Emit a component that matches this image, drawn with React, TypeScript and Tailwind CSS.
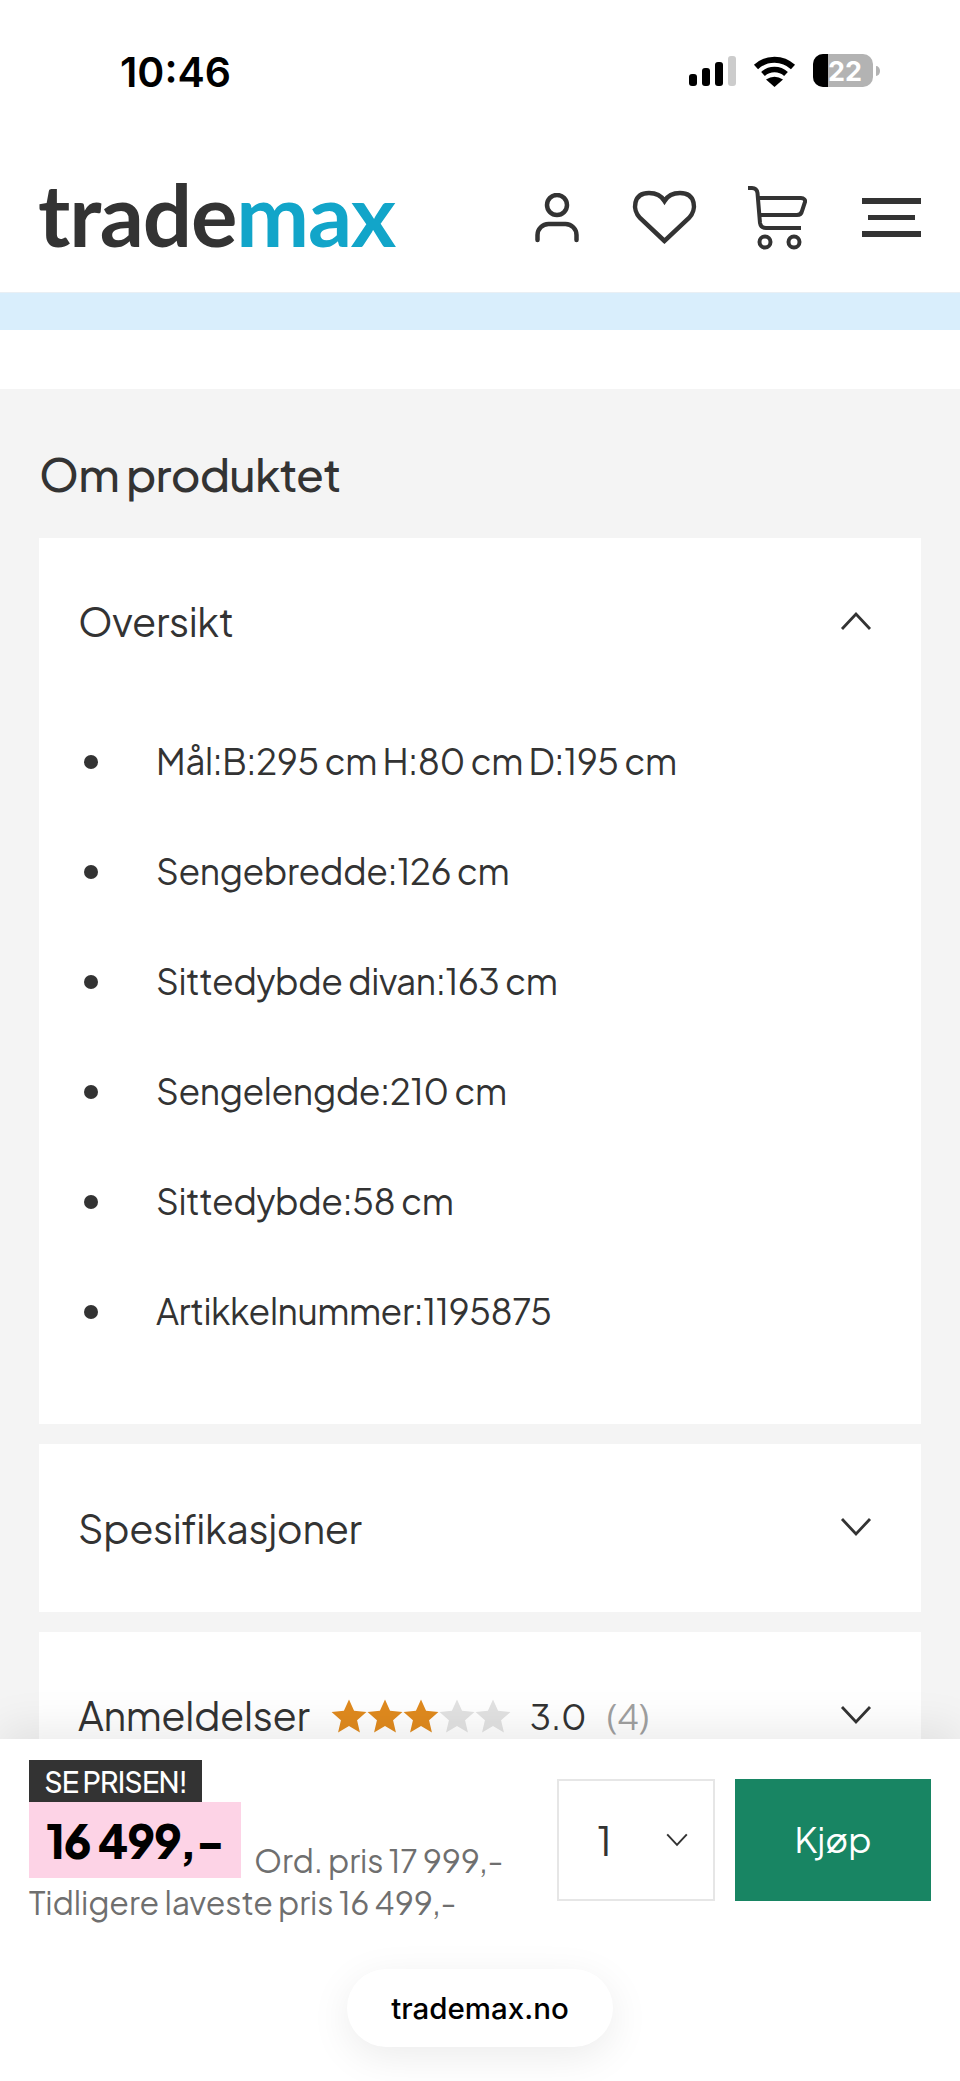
import React from "react";

function Chevron({ up, className }: { up?: boolean; className?: string }) {
  return (
    <svg viewBox="0 0 32 20" className={className} fill="none" stroke="#333333" strokeWidth="2.8">
      <path d={up ? "M2 18 L16 3 L30 18" : "M2 2 L16 17 L30 2"} />
    </svg>
  );
}

function Star({ color }: { color: string }) {
  return (
    <svg viewBox="0 0 24 24" className="w-[38px] h-[38px] -mx-[1px]">
      <path fill={color} d="M12 1.5l3.2 7.2 7.8.8-5.9 5.2 1.8 7.7L12 18.3 5.1 22.4l1.8-7.7L1 9.5l7.8-.8z" />
    </svg>
  );
}

const items = [
  "Mål:B:295 cm H:80 cm D:195 cm",
  "Sengebredde:126 cm",
  "Sittedybde divan:163 cm",
  "Sengelengde:210 cm",
  "Sittedybde:58 cm",
  "Artikkelnummer:1195875",
];

export default function App() {
  return (
    <div className="w-[960px] h-[2081px] overflow-hidden relative bg-white text-[#333333] [font-family:'Plus_Jakarta_Sans','Inter',sans-serif]">
      {/* status bar */}
      <div className="h-[134px] flex items-start justify-between pl-[120px] pr-[80px] pt-[50px]">
        <span className="text-[41px] leading-[44px] font-semibold text-black font-['Inter',sans-serif]">10:46</span>
        <svg viewBox="0 0 191 34" className="w-[191px] h-[34px] mt-[4px]">
          <rect x="0" y="20" width="8" height="12" rx="3" fill="#000" />
          <rect x="13" y="14" width="8" height="18" rx="3" fill="#000" />
          <rect x="26" y="8" width="8" height="24" rx="3" fill="#000" />
          <rect x="39" y="2" width="8" height="30" rx="3" fill="#cccccc" />
          <path d="M67 13 A 27 27 0 0 1 104 13" fill="none" stroke="#000" strokeWidth="6" />
          <path d="M74 20 A 17 17 0 0 1 97 20" fill="none" stroke="#000" strokeWidth="5.500" />
          <path d="M85.500 33 L77 25.500 Q85.500 20 94 25.500 Z" fill="#000" />
          <rect x="124" y="0" width="60" height="33" rx="10" fill="#b3b3b3" />
          <path d="M134 0 H139 V33 H134 A10 10 0 0 1 124 23 V10 A10 10 0 0 1 134 0Z" fill="#000" />
          <path d="M187 12 a4 5 0 0 1 0 10Z" fill="#b3b3b3" />
          <text x="139" y="27" fontSize="27" fontWeight="700" fill="#fff" fontFamily="Inter">22</text>
        </svg>
      </div>

      {/* header */}
      <div className="h-[158px] flex items-start justify-between pl-[38px] pr-[39px]">
        <div className="text-[87px] leading-[100px] font-bold tracking-[-1.2px] mt-[30px] font-['Lato',sans-serif]">
          <span className="text-[#333333]">trade</span>
          <span className="text-[#12a5c9]">max</span>
        </div>
        <div className="flex items-start mt-[51px]">
          <svg viewBox="0 0 48 50" className="w-[48px] h-[50px] mt-[8px]" fill="none" stroke="#333333" strokeWidth="4.5" strokeLinecap="round">
            <circle cx="24" cy="12" r="10" />
            <path d="M4.500 47 V42 A11 11 0 0 1 15.500 31 H32.500 A11 11 0 0 1 43.500 42 V47" />
          </svg>
          <svg viewBox="0 0 65 56" className="w-[65px] h-[56px] ml-[51px] mt-[5px]" fill="none" stroke="#333333" strokeWidth="4.5">
            <path d="M32.500 51 L8 28 C0 20 1 3 17 3 C24 3 29.500 6 32.500 11 C35.500 6 41 3 48 3 C64 3 65 20 57 28 Z" />
          </svg>
          <svg viewBox="0 0 60 65" className="w-[60px] h-[65px] ml-[50px]" fill="none" stroke="#333333" strokeWidth="4">
            <path d="M1 3 H5 C9 3 10 5 10.500 8 L13 38 C13.500 41 15 43 19 43 H54" />
            <path d="M12 13 H54 C57 13 58.500 15 58 17 L55 26 C54.500 28.500 53 30 50 30 H13" />
            <circle cx="18" cy="57" r="5.500" />
            <circle cx="47" cy="57" r="5.500" />
          </svg>
          <div className="flex flex-col items-center gap-[11px] ml-[55px] mt-[13px]">
            <div className="w-[59px] h-[6px] bg-[#333333]" />
            <div className="w-[47px] h-[5px] bg-[#333333]" />
            <div className="w-[59px] h-[6px] bg-[#333333]" />
          </div>
        </div>
      </div>

      {/* band */}
      <div className="h-[38px] bg-[#d9eefc] border-t border-[#e9eff4]" />
      <div className="h-[59px]" />

      {/* main */}
      <div className="bg-[#f4f4f4] h-[1692px] px-[39px]">
        <h2 className="pt-[58px] text-[45.500px] leading-[54px] font-medium tracking-[-0.8px]">Om produktet</h2>
        <div className="mt-[37px] bg-white">
          <div className="h-[169px] pl-[39px] pr-[49px] flex items-center justify-between">
            <span className="text-[39.600px] tracking-[-0.4px] -mt-[1px]">Oversikt</span>
            <Chevron up className="w-[32px] h-[20px] -mt-[4px]" />
          </div>
          <ul className="pb-[57px]">
            {items.map((t) => (
              <li key={t} className="h-[110px] flex items-center pl-[45px]">
                <span className="w-[14px] h-[14px] rounded-full bg-[#333333]" />
                <span className="ml-[58px] text-[35.400px] tracking-[-0.45px] -mt-[2px]">{t}</span>
              </li>
            ))}
          </ul>
        </div>
        <div className="mt-[20px] h-[168px] bg-white pl-[39px] pr-[49px] flex items-center justify-between">
          <span className="text-[39.600px] tracking-[-0.4px] mt-[2px]">Spesifikasjoner</span>
          <Chevron className="w-[32px] h-[20px] -mt-[2px]" />
        </div>
        <div className="mt-[20px] h-[168px] bg-white pl-[39px] pr-[49px] flex items-center justify-between">
          <div className="flex items-center">
            <span className="text-[39.600px] tracking-[-0.35px]">Anmeldelser</span>
            <span className="flex ml-[21px]">
              <Star color="#e08a1e" />
              <Star color="#e08a1e" />
              <Star color="#e08a1e" />
              <Star color="#e2e2e2" />
              <Star color="#e2e2e2" />
            </span>
            <span className="ml-[19px] text-[35px]">3.0</span>
            <span className="ml-[20px] text-[35px] text-[#a0a0a0]">(4)</span>
          </div>
          <Chevron className="w-[32px] h-[20px] -mt-[2px]" />
        </div>
      </div>

      {/* sticky footer */}
      <div className="absolute left-0 right-0 top-[1739px] h-[342px] bg-white shadow-[0_-12px_40px_rgba(0,0,0,0.08)]">
        <div className="flex justify-between pl-[29px] pr-[29px]">
          <div className="pt-[21px]">
            <div className="w-[173px] h-[42px] bg-[#333333] text-white text-[28.500px] leading-[42px] text-center tracking-[-0.8px] font-medium">SE PRISEN!</div>
            <div className="flex items-end">
              <div className="w-[212px] h-[76px] bg-[#fdd3e6] text-black text-[46px] leading-[76px] font-extrabold text-center tracking-[-1px]">16 499,-</div>
              <span className="ml-[13px] text-[32px] leading-[36px] text-[#6f6f6f] tracking-[-0.15px]">Ord. pris 17 999,-</span>
            </div>
            <div className="text-[32px] leading-[42px] mt-[3px] text-[#6f6f6f] tracking-[-0.1px]">Tidligere laveste pris 16 499,-</div>
          </div>
          <div className="flex pt-[40px] gap-[20px] items-start">
            <div className="w-[158px] h-[122px] border-2 border-[#e6e6e6] flex items-center justify-between pl-[38px] pr-[24px]">
              <span className="text-[40px]">1</span>
              <Chevron className="w-[24px] h-[14px]" />
            </div>
            <div className="w-[196px] h-[122px] bg-[#188563] text-white text-[35px] flex items-center justify-center pb-[1px]">Kjøp</div>
          </div>
        </div>
        <div className="absolute left-[347px] top-[230px] w-[266px] h-[78px] rounded-full bg-white shadow-[0_10px_40px_rgba(0,0,0,0.08)] flex items-center justify-center text-black text-[29.500px] font-medium font-['Inter',sans-serif]">trademax.no</div>
      </div>
    </div>
  );
}
